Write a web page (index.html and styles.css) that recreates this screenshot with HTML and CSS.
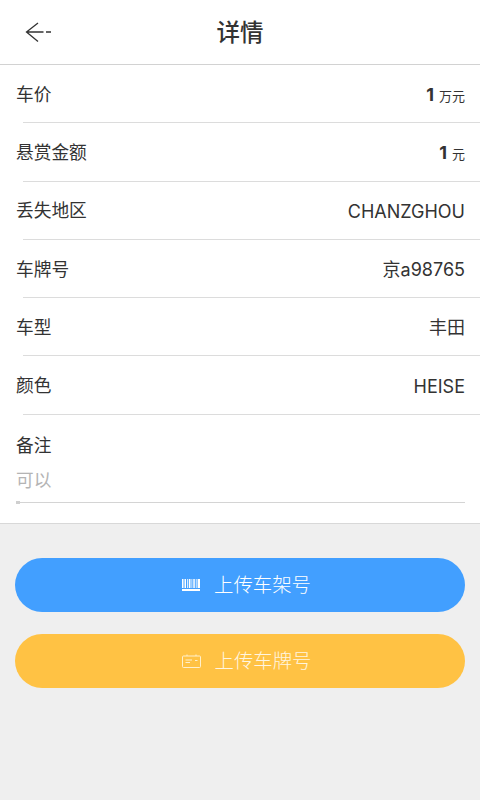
FILE: index.html
```html
<!DOCTYPE html>
<html lang="zh">
<head>
<meta charset="utf-8">
<title>详情</title>
<link rel="stylesheet" href="styles.css">
</head>
<body>
<div class="page">
  <header class="nav">
    <svg class="back" width="28" height="24" viewBox="0 0 28 24"><path d="M13 3 L1.500 12 L13 21.500 M1.500 12 H18.500 M21 12 H26" fill="none" stroke="#333" stroke-width="1.300"/></svg>
    <h1 class="title">详情</h1>
  </header>
  <section class="card">
    <div class="row"><span class="label">车价</span><span class="value"><b class="num">1</b> <small class="unit">万元</small></span></div>
    <div class="row"><span class="label">悬赏金额</span><span class="value"><b class="num">1</b> <small class="unit">元</small></span></div>
    <div class="row"><span class="label">丢失地区</span><span class="value latin">CHANZGHOU</span></div>
    <div class="row"><span class="label">车牌号</span><span class="value cjk">京a98765</span></div>
    <div class="row"><span class="label">车型</span><span class="value cjk">丰田</span></div>
    <div class="row"><span class="label">颜色</span><span class="value latin">HEISE</span></div>
    <div class="note">
      <div class="label">备注</div>
      <div class="hint">可以</div>
      <div class="track"><i class="thumb"></i></div>
    </div>
  </section>
  <div class="actions">
    <button class="btn blue">
      <svg width="18" height="12" viewBox="0 0 18 12"><path d="M0 0 H1.500 V9 H0 Z M2.500 0 H4 V9 H2.500 Z M5 0 H5.800 V9 H5 Z M6.800 0 H8.500 V9 H6.800 Z M9.500 0 H10.300 V9 H9.500 Z M11.300 0 H12.800 V9 H11.300 Z M13.800 0 H14.600 V9 H13.800 Z M15.600 0 H18 V9 H15.600 Z M0 10 H18 V12 H0 Z" fill="#fff"/></svg>
      <span>上传车架号</span>
    </button>
    <button class="btn yellow">
      <svg width="19" height="14" viewBox="0 0 19 14"><rect x="0.500" y="2" width="18" height="11.500" rx="1" fill="none" stroke="#fff0cc" stroke-width="1"/><path d="M5 0.500 V2 M14 0.500 V2 M3.500 6 H10 M3.500 8.500 H8 M13 6.500 H15.500" fill="none" stroke="#fff0cc" stroke-width="1"/></svg>
      <span>上传车牌号</span>
    </button>
  </div>
</div>
</body>
</html>
```

FILE: styles.css
```css
* { box-sizing: border-box; }
html, body { margin: 0; padding: 0; }
body {
  width: 480px;
  height: 800px;
  background: #efefef;
  color: #333;
  font-family: "Liberation Sans", "Noto Sans CJK SC", sans-serif;
  overflow: hidden;
}
.page { display: flex; flex-direction: column; height: 800px; }
.nav {
  height: 65px;
  flex: none;
  display: flex;
  align-items: center;
  justify-content: center;
  position: relative;
  background: #fff;
  border-bottom: 1px solid #d2d2d2;
}
.back { position: absolute; left: 25px; top: 20px; }
.title { margin: 0 0 2px; font-size: 23.500px; font-weight: 500; color: #333; }
.card { background: #fff; border-bottom: 1px solid #d8d8d8; }
.row {
  height: 58.300px;
  display: flex;
  align-items: center;
  justify-content: space-between;
  padding: 0 15px 0 16px;
  position: relative;
}
.row::after {
  content: "";
  position: absolute;
  left: 23px;
  right: 0;
  bottom: 0;
  height: 1px;
  background: #dcdcdc;
}
.label { font-size: 17.700px; color: #333; }
.row .label { padding-bottom: 3px; }
.value { font-family: Inter, "Noto Sans CJK SC", sans-serif; font-size: 18px; color: #333; }
.value.cjk { padding-bottom: 3px; }
.value.latin { padding-top: 1px; }
.num { font-size: 18px; font-weight: 700; }
.unit { font-size: 13px; }
.note { padding: 19px 15px 20.500px 16px; }
.note .label { line-height: 24px; }
.hint { margin-top: 11px; font-size: 17.700px; line-height: 24px; color: #b4b4b4; }
.track { position: relative; height: 1px; margin: 9px 0 0 0; background: #d4d4d4; }
.thumb { position: absolute; left: 0; top: -1px; width: 4px; height: 3px; background: #cfcfcf; }
.actions { display: flex; flex-direction: column; gap: 22px; padding: 33.500px 15px 0; }
.btn {
  height: 54px;
  border: 0;
  border-radius: 27px;
  display: flex;
  align-items: center;
  justify-content: center;
  gap: 14px;
  font-family: inherit;
  font-size: 19.400px;
  font-weight: 300;
  padding: 0 0 0 13px;
}
.btn span { padding-bottom: 3px; }
.blue { background: #429fff; color: #fff; }
.yellow { background: #ffc244; color: #fff6e0; }
```
